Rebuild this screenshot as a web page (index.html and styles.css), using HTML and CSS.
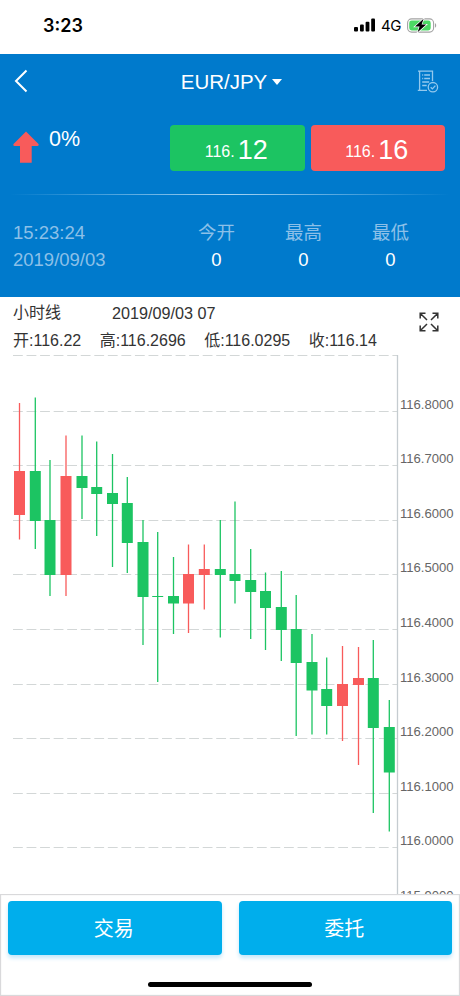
FILE: index.html
```html
<!DOCTYPE html>
<html lang="zh-CN">
<head>
  <meta charset="UTF-8">
  <meta name="viewport" content="width=device-width, initial-scale=1.0">
  <title>EUR/JPY</title>
  <link rel="stylesheet" href="styles.css">
</head>
<body>
  <div class="status-bar">
    <span class="clock">3:23</span>
    <div class="status-icons">
      <svg class="signal" width="22" height="14" viewBox="0 0 22 14">
        <rect x="0" y="9" width="4" height="4.5" rx="1"/>
        <rect x="6" y="6.5" width="3.8" height="7" rx="1"/>
        <rect x="11.6" y="3.7" width="3.8" height="9.8" rx="1"/>
        <rect x="17.2" y="0.5" width="3.8" height="13" rx="1"/>
      </svg>
      <span class="network">4G</span>
      <svg class="battery" width="30" height="15" viewBox="0 0 30 15">
        <rect x="0.6" y="0.9" width="26" height="13.2" rx="4" fill="none" stroke="#a3a3a3" stroke-width="1.1"/>
        <rect x="2.2" y="2.5" width="21.5" height="10" rx="2.4" fill="#4cd964"/>
        <path d="M28 5.3c1.6.5 1.6 3.9 0 4.4z" fill="#a3a3a3"/>
        <path d="M16.6 0.8L8 8.5h4.6l-2 5.8 8.6-7.7h-4.6z" fill="#000" stroke="#fff" stroke-width="1.4" paint-order="stroke"/>
      </svg>
    </div>
  </div>

  <header class="quote">
    <nav class="nav">
      <svg class="back" width="14" height="24" viewBox="0 0 14 24">
        <path d="M12.5 1.5L2 12l10.5 10.5" fill="none" stroke="#fff" stroke-width="2"/>
      </svg>
      <div class="pair">EUR/JPY<span class="caret"></span></div>
      <svg class="orders" width="22" height="23" viewBox="0 0 22 23" fill="none" stroke="#93c9ee" stroke-width="1.3">
        <path d="M15.5 11V1.2H2.6V20.2M0.8 20.4H10M2.6 1.2H1"/>
        <path d="M5.2 5h1M7.2 5H13M5.2 8.5h1M7.2 8.5H13M5.2 12h7M5.2 15.5h4.5"/>
        <circle cx="15.9" cy="17.2" r="4.7"/>
        <path d="M13.7 17.2l1.7 1.7 3-3.3"/>
      </svg>
    </nav>

    <div class="price-row">
      <svg class="arrow" width="26" height="32" viewBox="0 0 26 32">
        <path d="M13 0.5L25.5 13c.5 1-.1 2-1 2H18.7V31.7H7V15H1.5c-.9 0-1.5-1-1-2z" fill="#f85b5b"/>
      </svg>
      <span class="percent">0%</span>
      <div class="prices">
        <button class="price sell"><span>116.</span><b>12</b></button>
        <button class="price buy"><span>116.</span><b>16</b></button>
      </div>
    </div>

    <div class="divider"></div>

    <div class="stats">
      <div class="datetime">
        <p>15:23:24</p>
        <p>2019/09/03</p>
      </div>
      <div class="stat"><p>今开</p><p class="value">0</p></div>
      <div class="stat"><p>最高</p><p class="value">0</p></div>
      <div class="stat"><p>最低</p><p class="value">0</p></div>
    </div>
  </header>

  <section class="info">
    <div class="info-text">
      <div class="info-row">
        <span class="period">小时线</span>
        <span class="bar-time">2019/09/03 07</span>
      </div>
      <div class="info-row ohlc">
        <span>开:116.22</span>
        <span>高:116.2696</span>
        <span>低:116.0295</span>
        <span>收:116.14</span>
      </div>
    </div>
    <svg class="fullscreen" width="20" height="20" viewBox="0 0 20 20" fill="none" stroke="#333" stroke-width="1.5">
      <path d="M1.2 6.5V1.2H6.5M1.2 1.2L8 8M13.5 1.2h5.3v5.3M18.8 1.2L12 8M1.2 13.5v5.3h5.3M1.2 18.8L8 12M13.5 18.8h5.3v-5.3M18.8 18.8L12 12"/>
    </svg>
  </section>

  <svg class="chart" id="chart" width="460" height="544" viewBox="0 0 460 544"></svg>

  <footer class="footer">
    <div class="actions">
      <button class="action">交易</button>
      <button class="action">委托</button>
    </div>
    <div class="home-bar"></div>
  </footer>

  <script src="chart.js"></script>
</body>
</html>
```
FILE: styles.css
```css
* {
  box-sizing: border-box;
}

body {
  margin: 0;
  width: 460px;
  height: 996px;
  overflow: hidden;
  display: flex;
  flex-direction: column;
  background: #fff;
  font-family: "Liberation Sans", "Noto Sans CJK SC", sans-serif;
}

p {
  margin: 0;
}

svg {
  display: block;
  flex-shrink: 0;
}

button {
  border: none;
  padding: 0;
  font-family: inherit;
  color: #fff;
}

.status-bar {
  height: 54px;
  flex-shrink: 0;
  display: flex;
  justify-content: space-between;
  padding: 0 23px 4px 43px;
  align-items: center;
}

.clock {
  font-family: Inter, sans-serif;
  font-size: 18px;
  font-weight: 600;
}

.status-icons {
  display: flex;
  align-items: center;
}

.network {
  font-family: Inter, sans-serif;
  font-size: 15px;
  font-weight: 400;
  letter-spacing: -0.4px;
  margin: 0 6px 0 5px;
}

.quote {
  height: 243px;
  flex-shrink: 0;
  background: #007acc;
  color: #fff;
}

.nav {
  height: 56px;
  display: flex;
  align-items: center;
  justify-content: space-between;
  padding: 0 21px 2px 14px;
}

.pair {
  display: flex;
  align-items: center;
  gap: 5px;
  font-size: 20.5px;
  padding: 2px 0 0 18px;
}

.caret {
  border: 5.5px solid transparent;
  border-top: 6px solid #fff;
  border-bottom: 0;
}

.price-row {
  height: 84px;
  display: flex;
  align-items: flex-start;
  padding: 15px 15px 0 13px;
}

.arrow {
  margin-top: 6px;
}

.percent {
  font-size: 21.5px;
  line-height: 28px;
  margin-left: 10px;
}

.prices {
  display: flex;
  gap: 6px;
  margin-left: auto;
}

.price {
  width: 134.5px;
  height: 46px;
  border-radius: 4px;
  display: flex;
  align-items: baseline;
  justify-content: center;
  gap: 3px;
  padding-right: 2px;
  font-size: 16px;
  line-height: 51px;
}

.price span {
  position: relative;
  top: -2px;
}

.price b {
  font-size: 27px;
  font-weight: normal;
}

.sell {
  background: #1cc462;
}

.buy {
  background: #f85b5b;
}

.divider {
  height: 1px;
  margin: 0 10px;
  background: linear-gradient(to right, transparent, #a5d3f2 50%, transparent);
}

.stats {
  display: flex;
  padding: 24px 26px 0 13px;
  font-size: 18.5px;
  line-height: 27px;
  color: #8cc0e8;
}

.datetime {
  width: 160px;
}

.stat {
  width: 87px;
  text-align: center;
}

.value {
  color: #fff;
}

.info {
  height: 53px;
  flex-shrink: 0;
  display: flex;
  justify-content: space-between;
  padding: 2px 21px 0 13px;
  font-size: 16px;
  line-height: 28px;
  color: #333;
}

.info-row {
  display: flex;
  height: 28px;
  white-space: nowrap;
}

.period {
  width: 99px;
}

.bar-time {
  font-size: 16.2px;
}

.ohlc {
  gap: 18.5px;
}

.fullscreen {
  margin-top: 13px;
}

.chart text {
  font-size: 13.1px;
  fill: #666;
}

.grid {
  stroke: #d3d7d7;
  stroke-width: 1.2;
  stroke-dasharray: 9.8 3.75;
}

.axis {
  stroke: #c5ccd0;
  stroke-width: 1.3;
}

.up {
  fill: #f85b5b;
  stroke: #f85b5b;
}

.down {
  fill: #1cc462;
  stroke: #1cc462;
}

.candle {
  stroke: none;
}

.wick {
  stroke-width: 1.3;
}

.footer {
  height: 102px;
  flex-shrink: 0;
  display: flex;
  flex-direction: column;
  align-items: center;
  justify-content: space-between;
  padding: 6px 6px 8px;
  background: #fff;
  border: 1px solid #d9d9db;
  box-shadow: inset 0 0 1px #ccc;
}

.actions {
  width: 446px;
  display: flex;
  justify-content: space-between;
  padding: 0 1px;
}

.action {
  width: 213.5px;
  height: 54px;
  padding: 0 2px 2px 0;
  border-radius: 4px;
  background: #00aeec;
  font-size: 20px;
  box-shadow: 0 3px 4px #c3e7fa;
}

.home-bar {
  width: 164px;
  height: 5.5px;
  border-radius: 3px;
  background: #000;
}
```
FILE: chart.js
```js
const chart = document.getElementById('chart');
const bodyWidth = 11;

function add(name, attrs, text) {
  const el = document.createElementNS('http://www.w3.org/2000/svg', name);
  for (const key in attrs) {
    el.setAttribute(key, attrs[key]);
  }
  if (text) {
    el.textContent = text;
  }
  chart.appendChild(el);
}

// grid lines with the price above each one
const grid = [
  [5.5, ''], [61.5, '116.8000'], [115.5, '116.7000'], [170.5, '116.6000'],
  [224.5, '116.5000'], [279.5, '116.4000'], [334.5, '116.3000'],
  [388.5, '116.2000'], [443.5, '116.1000'], [497.5, '116.0000']
];

grid.forEach(([y, label]) => {
  add('line', { class: 'grid', x1: 13, x2: 397, y1: y, y2: y });
  add('text', { x: 400, y: y - 3 }, label);
});
// next price, partly under the footer
add('text', { x: 400, y: 549.5 }, '115.9000');
add('line', { class: 'axis', x1: 397.5, x2: 397.5, y1: 5, y2: 544 });

// direction, center x, high, low, body top, body bottom
const candles = [
  ['up', 19.5, 53, 189.5, 121, 165],
  ['down', 35.3, 47.5, 199, 121, 171],
  ['down', 50, 110, 246, 170, 225],
  ['up', 66, 85.5, 246, 126, 225],
  ['down', 82, 85.5, 169, 126, 138],
  ['down', 96.7, 91.5, 186, 137, 144],
  ['down', 112.5, 104, 217, 143, 154],
  ['down', 127.3, 127, 223, 153, 193],
  ['down', 143, 170, 295, 192, 247],
  ['down', 157.7, 182, 332, 246, 247],
  ['down', 173.5, 207, 284, 246, 253.5],
  ['up', 188.5, 194.5, 283, 224, 253.5],
  ['up', 204.3, 194.5, 259.5, 219, 225],
  ['down', 220.3, 170, 287.5, 219, 225],
  ['down', 235, 151.5, 253.5, 224, 231],
  ['down', 250.7, 199, 289, 230, 242],
  ['down', 265.5, 222.5, 300, 241, 258],
  ['down', 281.3, 221, 311, 257, 280],
  ['down', 296.2, 245, 386, 279, 313],
  ['down', 312, 284, 384.5, 312, 340.5],
  ['down', 326.7, 307.5, 384.5, 339, 356],
  ['up', 342.5, 296, 391, 334, 356],
  ['up', 358.5, 297, 415, 328, 335],
  ['down', 373.3, 290, 463, 328, 378],
  ['down', 389.3, 350, 481.5, 377, 422.5]
];

candles.forEach(([dir, x, high, low, top, bottom]) => {
  add('line', { class: 'wick ' + dir, x1: x, x2: x, y1: high, y2: low });
  add('rect', { class: dir + ' candle', x: x - bodyWidth / 2, y: top, width: bodyWidth, height: bottom - top });
});
```
